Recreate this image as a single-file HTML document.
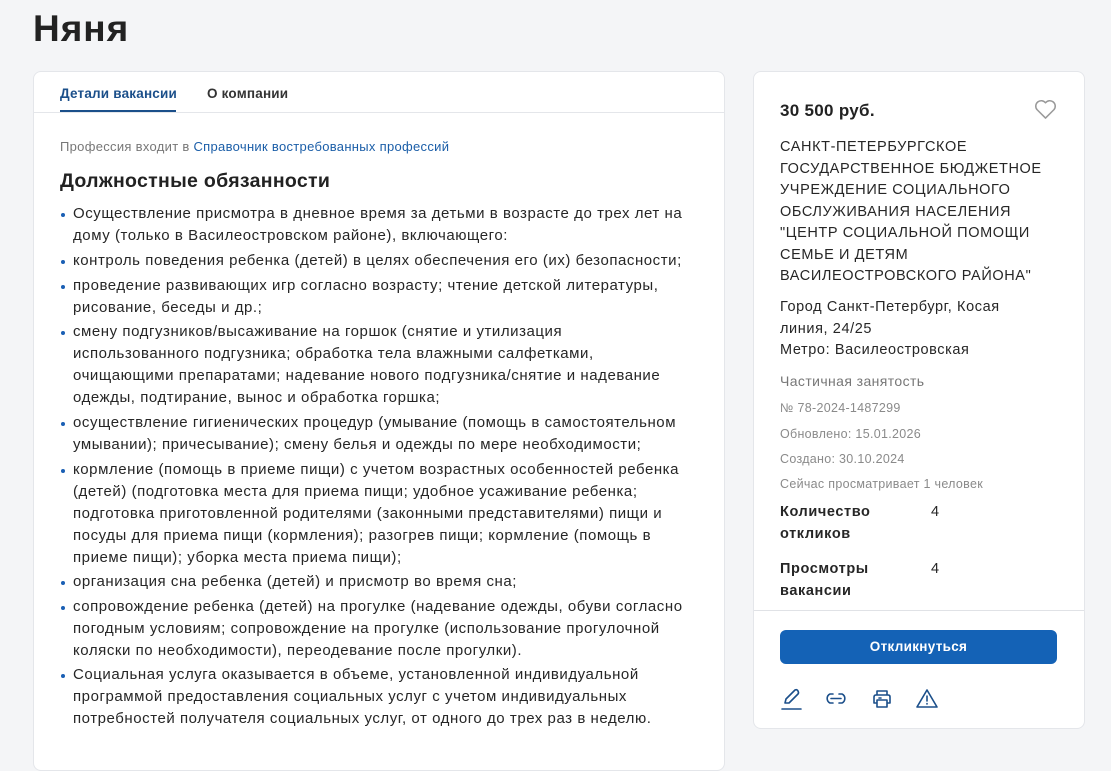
<!DOCTYPE html>
<html><head><meta charset="utf-8"><style>
*{margin:0;padding:0;box-sizing:border-box}
body{width:1111px;height:735px;overflow:hidden;background:#f4f5f7;font-family:"Liberation Sans",sans-serif;color:#1f1f1f;position:relative}
.a{position:absolute;white-space:nowrap}
h1{position:absolute;left:33px;top:8px;font-size:37px;font-weight:bold;color:#222;letter-spacing:1px}
.card{position:absolute;background:#fff;border:1px solid #e4e6ea;border-radius:8px}
.li{position:absolute;left:73px;font-size:15px;line-height:22px;color:#262626;white-space:nowrap;letter-spacing:0.55px}
.dot{position:absolute;left:61px;width:4px;height:4px;border-radius:50%;background:#1a5fb4}
.r{position:absolute;left:780px;font-size:14.5px;line-height:21.5px;color:#262626;white-space:nowrap;letter-spacing:0.6px}
.g{position:absolute;left:780px;font-size:12.5px;color:#8a8a8a;letter-spacing:0.3px}
</style></head><body>
<h1>Няня</h1>
<div class="card" style="left:33px;top:71px;width:692px;height:700px"></div>
<div class="a" style="left:60px;top:86px;font-size:13.5px;font-weight:bold;color:#1b4f8a;letter-spacing:0.2px">Детали вакансии</div>
<div class="a" style="left:207px;top:86px;font-size:13.5px;font-weight:bold;color:#333;letter-spacing:0.2px">О компании</div>
<div class="a" style="left:60px;top:110px;width:116px;height:3px;background:#1b4f8a"></div>
<div class="a" style="left:34px;top:112px;width:690px;height:1px;background:#e4e6ea"></div>
<div class="a" style="left:60px;top:139px;font-size:13px;color:#777;letter-spacing:0.3px">Профессия входит в <span style="color:#1b5ea8">Справочник востребованных профессий</span></div>
<div class="a" style="left:60px;top:170px;font-size:19.5px;font-weight:bold;color:#222;letter-spacing:0.3px">Должностные обязанности</div>

<div class="li" style="top:203px">Осуществление присмотра в дневное время за детьми в возрасте до трех лет на<br>дому (только в Василеостровском районе), включающего:</div>
<div class="li" style="top:250px">контроль поведения ребенка (детей) в целях обеспечения его (их) безопасности;</div>
<div class="li" style="top:275px">проведение развивающих игр согласно возрасту; чтение детской литературы,<br>рисование, беседы и др.;</div>
<div class="li" style="top:321px">смену подгузников/высаживание на горшок (снятие и утилизация<br>использованного подгузника; обработка тела влажными салфетками,<br>очищающими препаратами; надевание нового подгузника/снятие и надевание<br>одежды, подтирание, вынос и обработка горшка;</div>
<div class="li" style="top:412px">осуществление гигиенических процедур (умывание (помощь в самостоятельном<br>умывании); причесывание); смену белья и одежды по мере необходимости;</div>
<div class="li" style="top:459px">кормление (помощь в приеме пищи) с учетом возрастных особенностей ребенка<br>(детей) (подготовка места для приема пищи; удобное усаживание ребенка;<br>подготовка приготовленной родителями (законными представителями) пищи и<br>посуды для приема пищи (кормления); разогрев пищи; кормление (помощь в<br>приеме пищи); уборка места приема пищи);</div>
<div class="li" style="top:571px">организация сна ребенка (детей) и присмотр во время сна;</div>
<div class="li" style="top:596px">сопровождение ребенка (детей) на прогулке (надевание одежды, обуви согласно<br>погодным условиям; сопровождение на прогулке (использование прогулочной<br>коляски по необходимости), переодевание после прогулки).</div>
<div class="li" style="top:664px">Социальная услуга оказывается в объеме, установленной индивидуальной<br>программой предоставления социальных услуг с учетом индивидуальных<br>потребностей получателя социальных услуг, от одного до трех раз в неделю.</div>
<div class="dot" style="top:213px"></div><div class="dot" style="top:260px"></div><div class="dot" style="top:285px"></div><div class="dot" style="top:331px"></div><div class="dot" style="top:422px"></div><div class="dot" style="top:469px"></div><div class="dot" style="top:581px"></div><div class="dot" style="top:606px"></div><div class="dot" style="top:674px"></div>

<div class="card" style="left:753px;top:71px;width:332px;height:658px"></div>
<div class="a" style="left:780px;top:101px;font-size:17px;font-weight:bold;color:#222;letter-spacing:0.3px">30 500 руб.</div>
<svg class="a" style="left:1034px;top:99px" width="23" height="21" viewBox="0 0 24 22"><path d="M12 20 L3 11 A5 5 0 0 1 12 4 A5 5 0 0 1 21 11 Z" fill="none" stroke="#999" stroke-width="1.6" stroke-linejoin="round"/></svg>
<div class="r" style="top:137px">САНКТ-ПЕТЕРБУРГСКОЕ<br>ГОСУДАРСТВЕННОЕ БЮДЖЕТНОЕ<br>УЧРЕЖДЕНИЕ СОЦИАЛЬНОГО<br>ОБСЛУЖИВАНИЯ НАСЕЛЕНИЯ<br>"ЦЕНТР СОЦИАЛЬНОЙ ПОМОЩИ<br>СЕМЬЕ И ДЕТЯМ<br>ВАСИЛЕОСТРОВСКОГО РАЙОНА"</div>
<div class="r" style="top:297px">Город Санкт-Петербург, Косая<br>линия, 24/25<br>Метро: Василеостровская</div>
<div class="a" style="left:780px;top:373px;font-size:14px;color:#777;letter-spacing:0.4px">Частичная занятость</div>
<div class="g" style="top:401px">№ 78-2024-1487299</div>
<div class="g" style="top:427px">Обновлено: 15.01.2026</div>
<div class="g" style="top:452px">Создано: 30.10.2024</div>
<div class="g" style="top:477px">Сейчас просматривает 1 человек</div>
<div class="r" style="top:502px;font-weight:bold">Количество<br>откликов</div>
<div class="r" style="left:931px;top:502px">4</div>
<div class="r" style="top:559px;font-weight:bold">Просмотры<br>вакансии</div>
<div class="r" style="left:931px;top:559px">4</div>
<div class="a" style="left:754px;top:610px;width:330px;height:1px;background:#e0e2e6"></div>
<div class="a" style="left:780px;top:630px;width:277px;height:34px;background:#1462b6;border-radius:6px;color:#fff;font-size:13.5px;font-weight:bold;text-align:center;line-height:34px;letter-spacing:0.3px">Откликнуться</div>
<svg class="a" style="left:780px;top:686px" width="165" height="26" viewBox="0 0 165 26" fill="none" stroke="#1b4f8a" stroke-width="1.6" stroke-linejoin="round" stroke-linecap="round">
<path d="M5 17 L6 13 L15 4 Q17 3 18 5 Q19 7 18 8 L9 17 Z"/><path d="M2 23 H21"/>
<path d="M53 8 H50 A5 5 0 0 0 50 17 H53 M59 8 H62 A5 5 0 0 1 62 17 H59 M51 12.5 H61"/>
<path d="M97 9 V5 H107 V9 M96 9 H108 Q110 9 110 11 V17 H107 M97 17 H94 V11 Q94 9 96 9 M97 14 H107 V21 H97 Z M99 12 H101"/>
<path d="M147 4 L157 21 H137 Z M147 10 V15 M147 17.5 V18"/>
</svg>
</body></html>
